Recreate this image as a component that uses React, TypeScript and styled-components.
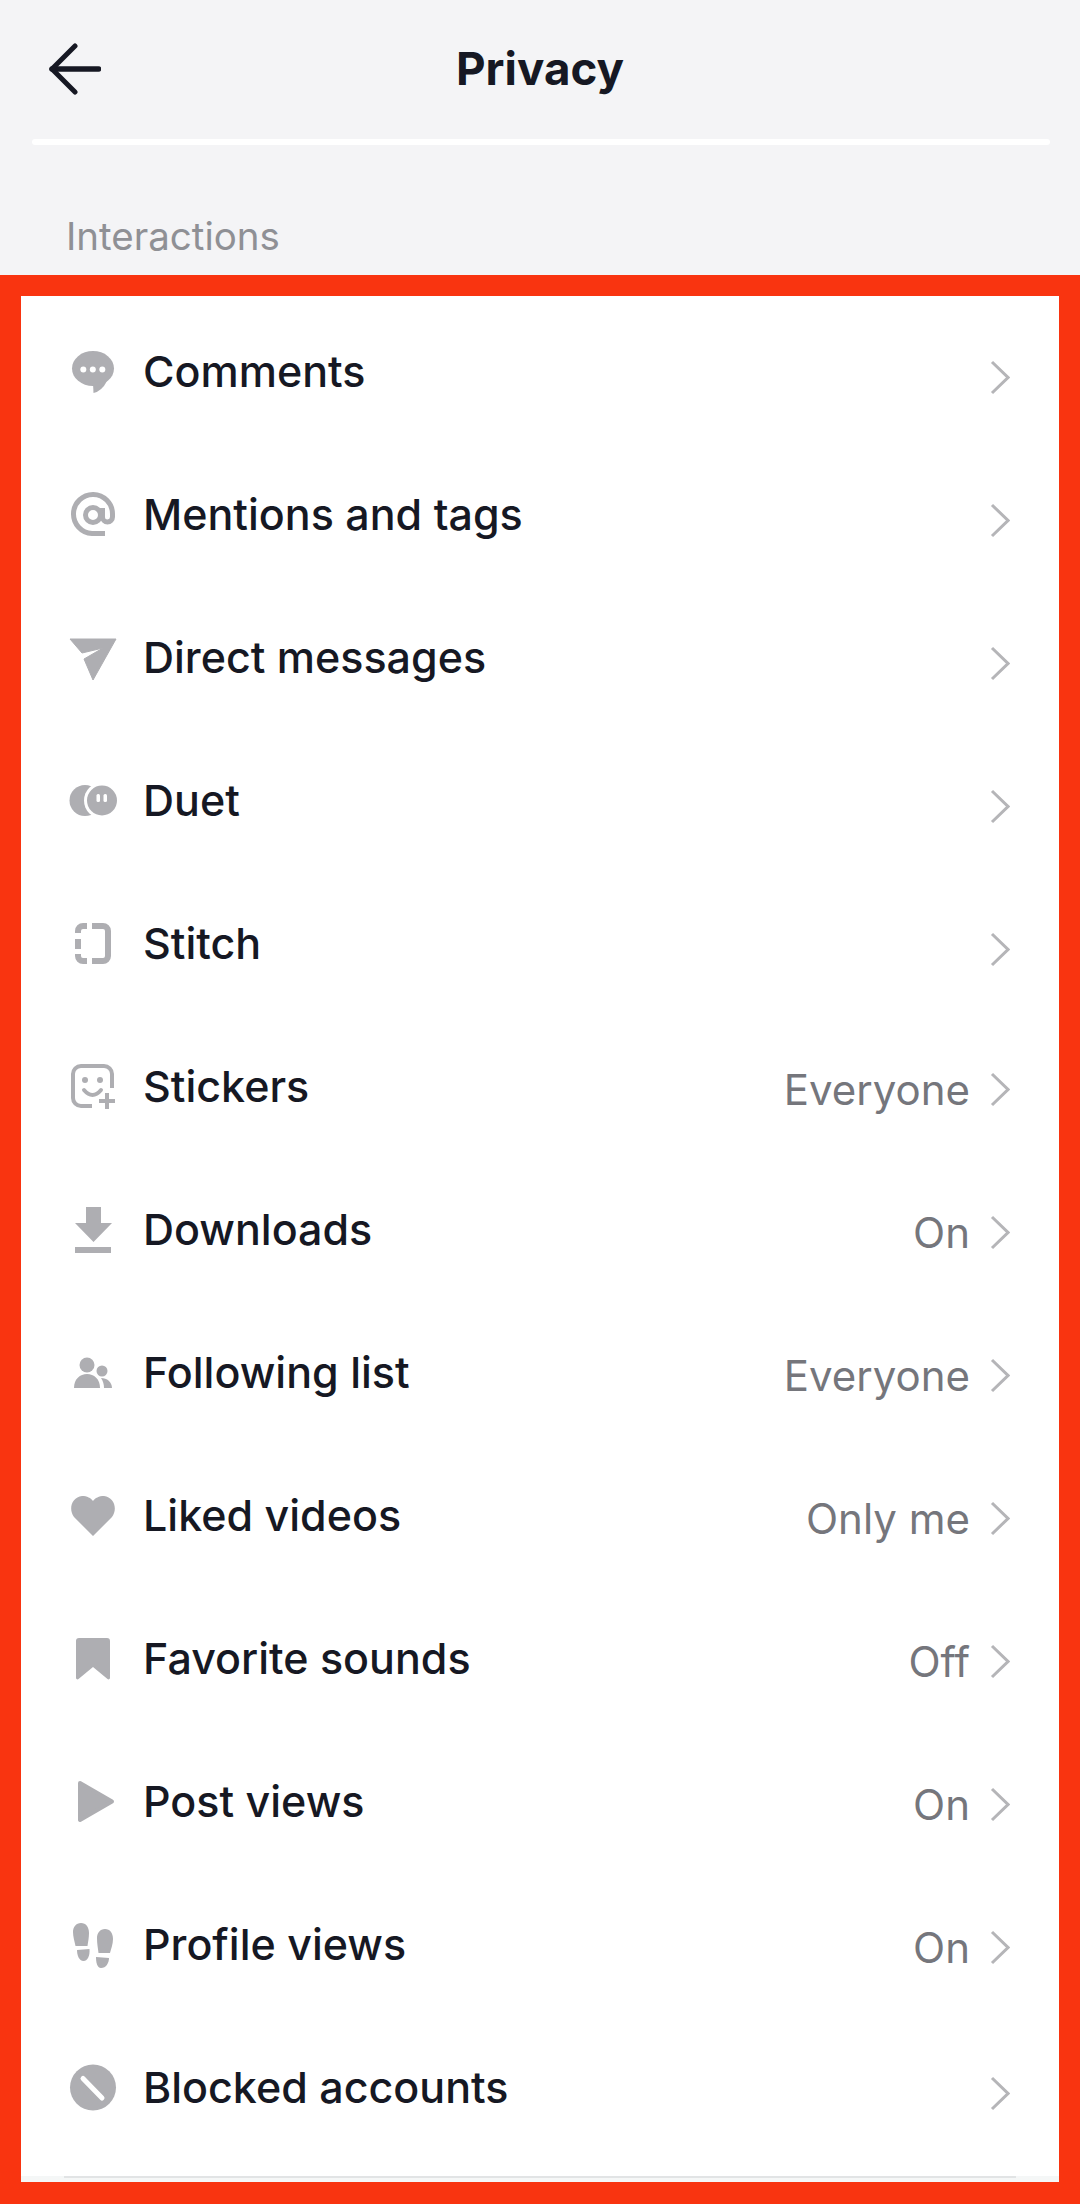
import React from 'react'
import styled, { createGlobalStyle } from 'styled-components'

const GlobalStyle = createGlobalStyle`
  html, body {
    margin: 0;
    padding: 0;
    background: #f4f4f6;
  }
  body {
    font-family: "Inter", "Liberation Sans", sans-serif;
  }
`

const PageUI = styled.div`
  width: 1080px;
  height: 2204px;
  display: flex;
  flex-direction: column;
  overflow: hidden;
  background: #f4f4f6;
`
const HeaderUI = styled.header`
  height: 137px;
  flex: none;
  display: grid;
  grid-template-columns: 1fr auto 1fr;
  align-items: center;
  padding: 0 49px;
`
const BackUI = styled.button`
  justify-self: start;
  display: flex;
  padding: 0;
  border: none;
  background: none;
`
const TitleUI = styled.h1`
  margin: 0;
  font-size: 45.7px;
  line-height: 1;
  font-weight: 700;
  color: #161823;
`
const DividerUI = styled.div`
  flex: none;
  height: 6px;
  margin: 2px 30px 0 32px;
  border-radius: 4px;
  background: #ffffff;
`
const SectionUI = styled.div`
  flex: none;
  height: 130px;
  box-sizing: border-box;
  padding: 67px 0 0 66px;
  font-size: 38.5px;
  line-height: 48px;
  color: #8f9095;
`
const FrameUI = styled.section`
  flex: 1;
  display: flex;
  flex-direction: column;
  border: solid #f93410;
  border-width: 21px 21px 22px;
  background: #ffffff;
  padding-top: 4px;
`
const RowUI = styled.div`
  flex: none;
  height: 143px;
  display: flex;
  align-items: center;
  padding: 0 49px 0 48px;
`
const IconBoxUI = styled.span`
  flex: none;
  width: 48px;
  height: 48px;
  margin-right: 26px;
  color: #aeaeb2;
  svg {
    display: block;
  }
`
const LabelUI = styled.span`
  flex: 1;
  padding-bottom: 2px;
  font-size: 43px;
  font-weight: 500;
  color: #161823;
`
const TrailingUI = styled.span<{ $plain: boolean }>`
  display: flex;
  align-items: center;
  gap: 20px;
  padding-top: ${({ $plain }) => ($plain ? 12 : 6)}px;
`
const ValueUI = styled.span`
  font-size: 42px;
  color: #75767c;
`
const FooterLineUI = styled.div`
  margin-top: auto;
  height: 6px;
  background: #f5f7f7;
  &::before {
    content: '';
    display: block;
    height: 2px;
    margin: 0 43px;
    background: #e2e4e5;
  }
`

const Svg = ({ children }: { children: React.ReactNode }) => (
  <svg width="48" height="48" viewBox="0 0 48 48" fill="currentColor">
    {children}
  </svg>
)

const CommentIcon = () => (
  <Svg>
    <ellipse cx="24" cy="20.5" rx="21" ry="17.5" />
    <path d="M24 35 L24.5 45 Q33 43 38 33 Z" />
    <g fill="#fff">
      <circle cx="14.3" cy="21.5" r="3" />
      <circle cx="23.8" cy="21.5" r="3" />
      <circle cx="33.3" cy="21.5" r="3" />
    </g>
  </Svg>
)
const AtIcon = () => (
  <Svg>
    <g fill="none" stroke="currentColor" strokeWidth="5">
      <path d="M36 42.5 H23 A19.5 19.5 0 1 1 43.5 23 V26 A5 5 0 0 1 33.5 26 V17" />
      <circle cx="24" cy="24" r="7.5" />
    </g>
  </Svg>
)
const SendIcon = () => (
  <Svg>
    <path d="M1 5 H47 L24 46 L15 25 L34 14 L13 19 Z" stroke="currentColor" strokeWidth="1" strokeLinejoin="round" />
  </Svg>
)
const DuetIcon = () => (
  <Svg>
    <circle cx="16" cy="23.5" r="15.5" />
    <circle cx="33" cy="23.5" r="18" fill="#fff" />
    <circle cx="33" cy="23.5" r="15" />
    <rect x="27.5" y="17" width="3.5" height="8" rx="1.5" fill="#fff" />
    <rect x="34.5" y="17" width="3.5" height="8" rx="1.5" fill="#fff" />
  </Svg>
)
const StitchIcon = () => (
  <Svg>
    <g fill="none" stroke="currentColor" strokeWidth="6">
      <path d="M23 6 H34 a5 5 0 0 1 5 5 V36 a5 5 0 0 1 -5 5 H23" />
      <path d="M18 6 H14 a5 5 0 0 0 -5 5 V13" />
      <path d="M9 19 V29" />
      <path d="M9 34 V36 a5 5 0 0 0 5 5 H18" />
    </g>
  </Svg>
)
const StickerIcon = () => (
  <Svg>
    <g fill="none" stroke="currentColor" strokeWidth="4">
      <path d="M23 43 H12 a8 8 0 0 1 -8 -8 V11 a8 8 0 0 1 8 -8 H35 a8 8 0 0 1 8 8 V25" />
      <path d="M15 27 Q23.5 37 32 27" strokeLinecap="round" />
      <path d="M38 30 V46 M30 38 H46" />
    </g>
    <circle cx="16" cy="17" r="3" />
    <circle cx="31" cy="17" r="3" />
  </Svg>
)
const DownloadIcon = () => (
  <Svg>
    <path d="M17 1 H32 V17 H43 L24.5 36 L6 17 H17 Z" />
    <rect x="6" y="41" width="36" height="6" />
  </Svg>
)
const FollowingIcon = () => (
  <Svg>
    <circle cx="18" cy="16" r="7.5" />
    <path d="M5 39 C5 30 11 25 18 25 C25 25 31 30 31 39 Z" />
    <circle cx="33" cy="22" r="5.5" />
    <path d="M32 29 C38 29 43 33 43 39 H35 C35 35 34 32 32 29 Z" />
  </Svg>
)
const HeartIcon = () => (
  <Svg>
    <path d="M24 44 L5 25 C-1 17 3 5 13 4 C18 4 22 6 24 9 C26 6 30 4 35 4 C45 5 49 17 43 25 Z" />
  </Svg>
)
const BookmarkIcon = () => (
  <Svg>
    <path d="M10 3 H38 a3 3 0 0 1 3 3 V43 a1.5 1.5 0 0 1 -2.5 1 L24 32 L9.5 44 a1.5 1.5 0 0 1 -2.5 -1 V6 a3 3 0 0 1 3 -3 Z" />
  </Svg>
)
const PlayIcon = () => (
  <Svg>
    <path d="M11 5 L43 23.5 L11 42 Z" stroke="currentColor" strokeWidth="4" strokeLinejoin="round" />
  </Svg>
)
const FootIcon = () => (
  <Svg>
    <path d="M12 2 C17 2 20 6 20 12 C20 17 19 21 18.5 25 H6.5 C5.5 20 4 16 4 11 C4 6 7 2 12 2 Z" />
    <path d="M8 29 L20.5 28 C21 34 19 40 14.5 40 C10 40 8 34 8 29 Z" />
    <path d="M36 8 C41 8 44 12 44 18 C44 23 42 28 41 32 H29.5 C29 27 28 23 28 17 C28 12 31 8 36 8 Z" />
    <path d="M27 36 L40 37 C40 42 37 47 32 47 C28 47 27 41 27 36 Z" />
  </Svg>
)
const BlockedIcon = () => (
  <Svg>
    <circle cx="24" cy="23.5" r="23" />
    <path d="M14 14.5 L33 34" stroke="#fff" strokeWidth="5" strokeLinecap="round" />
  </Svg>
)

const Chevron = () => (
  <svg width="20" height="35" viewBox="0 0 20 35" fill="none" stroke="#b5b5b8" strokeWidth="3">
    <path d="M2 2 L18 17.5 L2 33" />
  </svg>
)

type Item = { label: string; icon: React.ComponentType; value?: string }

const items: Item[] = [
  { label: 'Comments', icon: CommentIcon },
  { label: 'Mentions and tags', icon: AtIcon },
  { label: 'Direct messages', icon: SendIcon },
  { label: 'Duet', icon: DuetIcon },
  { label: 'Stitch', icon: StitchIcon },
  { label: 'Stickers', icon: StickerIcon, value: 'Everyone' },
  { label: 'Downloads', icon: DownloadIcon, value: 'On' },
  { label: 'Following list', icon: FollowingIcon, value: 'Everyone' },
  { label: 'Liked videos', icon: HeartIcon, value: 'Only me' },
  { label: 'Favorite sounds', icon: BookmarkIcon, value: 'Off' },
  { label: 'Post views', icon: PlayIcon, value: 'On' },
  { label: 'Profile views', icon: FootIcon, value: 'On' },
  { label: 'Blocked accounts', icon: BlockedIcon },
]

export default function App() {
  return (
    <PageUI>
      <GlobalStyle />
      <HeaderUI>
        <BackUI aria-label="Back">
          <svg width="52" height="52" viewBox="0 0 52 52" fill="none" stroke="#161823">
            <path d="M3 26 H49.5" strokeWidth="5.5" strokeLinecap="round" />
            <path d="M26 3 L3 26 L26 49" strokeWidth="5" strokeLinecap="round" strokeLinejoin="round" />
          </svg>
        </BackUI>
        <TitleUI>Privacy</TitleUI>
      </HeaderUI>
      <DividerUI />
      <SectionUI>Interactions</SectionUI>
      <FrameUI>
        {items.map(({ label, icon: Icon, value }) => (
          <RowUI key={label}>
            <IconBoxUI>
              <Icon />
            </IconBoxUI>
            <LabelUI>{label}</LabelUI>
            <TrailingUI $plain={!value}>
              {value && <ValueUI>{value}</ValueUI>}
              <Chevron />
            </TrailingUI>
          </RowUI>
        ))}
        <FooterLineUI />
      </FrameUI>
    </PageUI>
  )
}
